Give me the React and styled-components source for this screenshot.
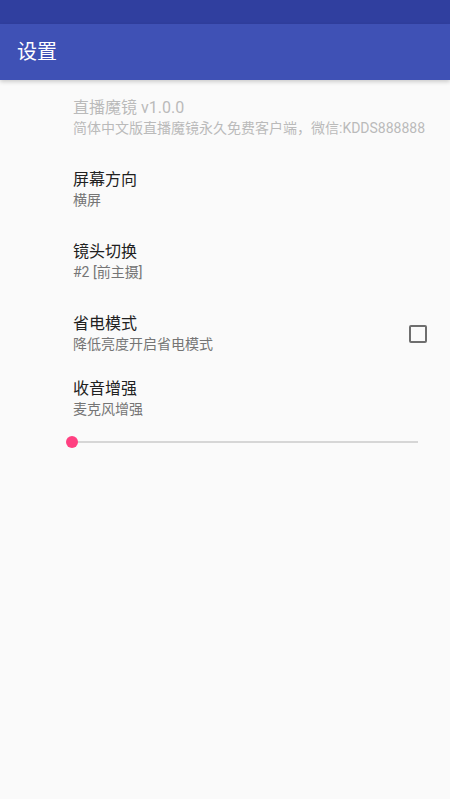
import React, { useState } from 'react';
import styled, { createGlobalStyle } from 'styled-components';

const GlobalStyle = createGlobalStyle`
    html, body {
        margin: 0;
        padding: 0;
        background: #fafafa;
    }
    body {
        font-family: Roboto, "Noto Sans CJK SC", sans-serif;
    }
`;

const prefs = [
    { key: 'about', title: '直播魔镜 v1.0.0', summary: '简体中文版直播魔镜永久免费客户端，微信:KDDS888888', disabled: true },
    { key: 'orientation', title: '屏幕方向', summary: '横屏' },
    { key: 'camera', title: '镜头切换', summary: '#2 [前主摄]' },
    { key: 'power', title: '省电模式', summary: '降低亮度开启省电模式', checkbox: true },
];

const App = () => {
    const [checked, setChecked] = useState(false);
    const [gain] = useState(0);

    return (
        <Screen>
            <GlobalStyle />
            <StatusBar />
            <Toolbar>
                <ToolbarTitle>设置</ToolbarTitle>
            </Toolbar>

            <PrefList>
                {prefs.map(p => (
                    <PrefItem key={p.key}>
                        <PrefText>
                            <PrefTitle $disabled={p.disabled}>{p.title}</PrefTitle>
                            <PrefSummary $disabled={p.disabled}>{p.summary}</PrefSummary>
                        </PrefText>
                        {p.checkbox && (
                            <CheckBox $checked={checked} onClick={() => setChecked(!checked)} />
                        )}
                    </PrefItem>
                ))}

                <SeekItem>
                    <PrefTitle>收音增强</PrefTitle>
                    <PrefSummary>麦克风增强</PrefSummary>
                    <SeekRow>
                        <SeekTrack>
                            <SeekThumb style={{ left: `${gain}%` }} />
                        </SeekTrack>
                    </SeekRow>
                </SeekItem>
            </PrefList>
        </Screen>
    );
};
export default App;

const Screen = styled.div`
    width: 450px;
    min-height: 799px;
    background: #fafafa;
    display: flex;
    flex-direction: column;
`;

const StatusBar = styled.div`
    height: 24px;
    background: #303f9f;
`;

const Toolbar = styled.div`
    height: 56px;
    background: #3f51b5;
    display: flex;
    align-items: center;
    padding-left: 17px;
    box-shadow: 0 2px 4px rgba(0, 0, 0, 0.18);
    position: relative;
    z-index: 1;
`;

const ToolbarTitle = styled.h1`
    margin: 0;
    color: #fff;
    font-size: 20px;
    font-weight: 400;
    line-height: 28px;
`;

const PrefList = styled.div`
    display: flex;
    flex-direction: column;
`;

const PrefItem = styled.div`
    height: 72px;
    box-sizing: border-box;
    padding: 18px 23px 14px 73px;
    display: flex;
    align-items: center;
`;

const PrefText = styled.div`
    flex: 1;
    display: flex;
    flex-direction: column;
    align-self: flex-start;
`;

const PrefTitle = styled.div`
    font-size: 16px;
    line-height: 20px;
    color: ${p => (p.$disabled ? '#bababa' : '#212121')};
    white-space: nowrap;
`;

const PrefSummary = styled.div`
    font-size: 14px;
    line-height: 20px;
    color: ${p => (p.$disabled ? '#bababa' : '#757575')};
    white-space: nowrap;
`;

const CheckBox = styled.div`
    width: 14px;
    height: 14px;
    border: 2px solid #6e6e6e;
    border-radius: 2px;
    background: ${p => (p.$checked ? '#ff4081' : 'transparent')};
    cursor: pointer;
`;

const SeekItem = styled.div`
    padding: 11px 32px 0 73px;
    display: flex;
    flex-direction: column;
`;

const SeekRow = styled.div`
    height: 24px;
    margin-top: 11px;
    display: flex;
    align-items: center;
    margin-left: -1px;
`;

const SeekTrack = styled.div`
    position: relative;
    flex: 1;
    height: 2px;
    background: #d6d6d6;
`;

const SeekThumb = styled.div`
    position: absolute;
    top: 50%;
    width: 12px;
    height: 12px;
    border-radius: 50%;
    background: #ff4081;
    transform: translate(-50%, -50%);
`;
